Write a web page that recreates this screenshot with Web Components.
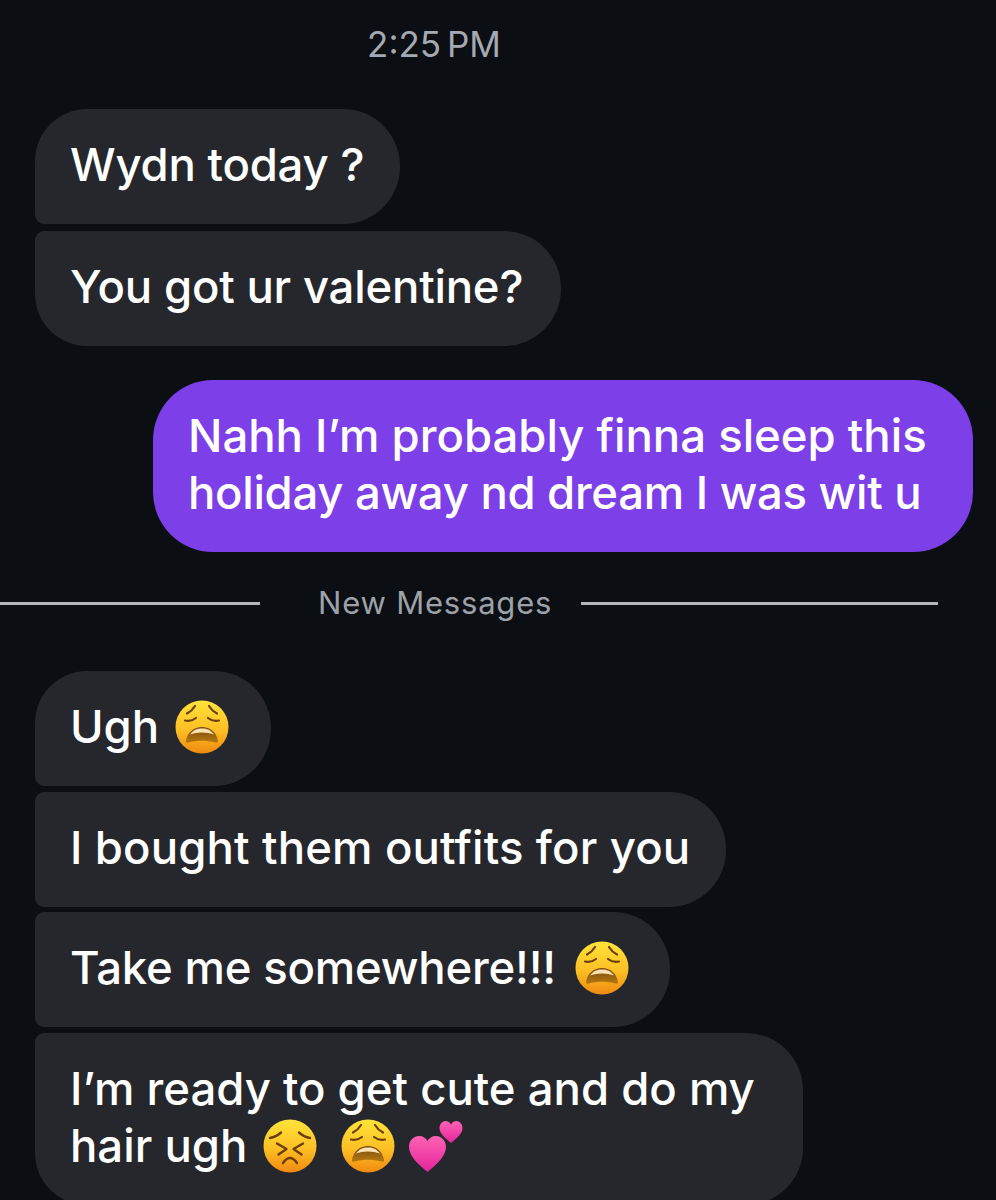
<!DOCTYPE html>
<html lang="en">
<head>
<meta charset="utf-8">
<title>Chat</title>
<style>
html,body{margin:0;padding:0;background:#0b0e13;}
body{width:996px;height:1200px;overflow:hidden;font-family:Inter,"Liberation Sans",sans-serif;}
</style>
</head>
<body>
<chat-thread>
  <chat-time>2:25 PM</chat-time>
  <chat-group style="--mt:43px;--gap:7px">
    <chat-bubble pos="first" style="--pr:36px;--ls:-.2px">Wydn today ?</chat-bubble>
    <chat-bubble pos="last" style="--pr:38px;--ls:-.2px">You got ur valentine?</chat-bubble>
  </chat-group>
  <chat-bubble mine><chat-line style="--ls:0px">Nahh I’m probably finna sleep this</chat-line> <chat-line style="--ls:-.3px">holiday away nd dream I was wit u</chat-line></chat-bubble>
  <chat-divider>New Messages</chat-divider>
  <chat-group style="--mt:42px;--gap:5.67px">
    <chat-bubble pos="first" style="--pr:42px">Ugh <chat-emoji name="weary"></chat-emoji></chat-bubble>
    <chat-bubble pos="mid" style="--ls:.15px">I bought them outfits for you</chat-bubble>
    <chat-bubble pos="mid" style="--pr:41px;--ls:-.2px">Take me somewhere!!! <chat-emoji name="weary" style="margin-left:7px"></chat-emoji></chat-bubble>
    <chat-bubble pos="last" style="--w:768px;--ls:0px">I’m ready to get cute and do my hair ugh <chat-emoji name="persevere"></chat-emoji> <chat-emoji name="weary" style="margin-left:11px"></chat-emoji> <chat-emoji name="hearts" style="margin-left:2px"></chat-emoji></chat-bubble>
  </chat-group>
</chat-thread>
<script>
const shared = {
  defs: `<defs>
    <linearGradient id="f" x1="0" y1="0" x2="0" y2="1"><stop offset="0" stop-color="#ffe33a"/><stop offset=".55" stop-color="#fdbf24"/><stop offset="1" stop-color="#f08a10"/></linearGradient>
    <linearGradient id="m" x1="0" y1="0" x2="0" y2="1"><stop offset="0" stop-color="#7a4a12"/><stop offset="1" stop-color="#b5780f"/></linearGradient>
    <linearGradient id="h" x1="0" y1="0" x2="0" y2="1"><stop offset="0" stop-color="#ff62b4"/><stop offset="1" stop-color="#e3249a"/></linearGradient>
  </defs>`
};
const EMOJI = {
  weary: `<svg viewBox="0 0 54 54" width="54" height="54" aria-hidden="true">${shared.defs}
    <circle cx="27" cy="27" r="26.5" fill="url(#f)"/>
    <g fill="none" stroke="#6b3f0c" stroke-width="2.2" stroke-linecap="round">
      <path d="M20 6Q17 11 12 13.5"/><path d="M34 6Q37 11 42 13.5"/>
      <path d="M10 20.5Q16 22 21 18"/><path d="M44 20.5Q38 22 33 18"/>
    </g>
    <path d="M11 41C12.500 32 19 27 27 27S41.500 32 43 41C43.200 42.500 42 43 40.500 42.500C32 40 22 40 13.500 42.500C12 43 10.800 42.500 11 41Z" fill="url(#m)"/>
    <path d="M15 34.500C18.500 30 22 28.500 27 28.500S35.500 30 39 34.500C32 31.800 22 31.800 15 34.500Z" fill="#f7e2b0"/>
  </svg>`,
  persevere: `<svg viewBox="0 0 54 54" width="54" height="54" aria-hidden="true">${shared.defs}
    <circle cx="27" cy="27" r="26.5" fill="url(#f)"/>
    <g fill="none" stroke="#6b3f0c" stroke-width="2.4" stroke-linecap="round" stroke-linejoin="round">
      <path d="M7 19Q13 18 18 13.500"/><path d="M47 19Q41 18 36 13.500"/>
      <path d="M14 24.500L23.500 30L15.500 35.500"/><path d="M40 24.500L30.500 30L38.500 35.500"/>
      <path d="M20 44Q27 34 34 44"/>
    </g>
  </svg>`,
  hearts: `<svg viewBox="0 0 54 54" width="54" height="54" aria-hidden="true" style="overflow:visible">${shared.defs}
    <path d="M18.500 53C9 45 0 37 0 28C0 21 5 17 10 17C14 17 17 19 18.500 22C20 19 23 17 27 17C32 17 37 21 37 28C37 37 28 45 18.500 53Z" fill="url(#h)"/>
    <path d="M42 24C36.500 19 30.500 15 30.500 9C30.500 5 33.500 2 36.500 2C39 2 41 3.500 42 5.500C43 3.500 45 2 47.500 2C50.500 2 53.500 5 53.500 9C53.500 15 47.500 19 42 24Z" fill="url(#h)"/>
  </svg>`
};
function def(tag, css, html, setup){
  customElements.define(tag, class extends HTMLElement{
    constructor(){super();this.attachShadow({mode:'open'}).innerHTML=`<style>${css}</style>${html}`;}
    connectedCallback(){ if(setup) setup.call(this); }
  });
}
def('chat-thread', `:host{display:flex;flex-direction:column;align-items:flex-start;padding:22px 23px 0 35px;box-sizing:border-box;width:996px;color:#fff;font:400 45.5px/57px Inter,"Liberation Sans",sans-serif;-webkit-font-smoothing:antialiased}`, `<slot></slot>`);
def('chat-time', `:host{display:block;width:798px;text-align:center;font-size:35px;line-height:44px;color:#a5a9b2;word-spacing:-4px}`, `<slot></slot>`);
def('chat-group', `:host{display:flex;flex-direction:column;align-items:flex-start;gap:var(--gap,6px);margin-top:var(--mt,0)}`, `<slot></slot>`);
def('chat-bubble', `
  :host{display:block;box-sizing:border-box;padding:27px var(--pr,36px) 31px 35px;background:#25272c;max-width:var(--w,none);width:fit-content;border-radius:57px;font-weight:500;letter-spacing:var(--ls,-.1px)}
  :host([pos=first]){border-radius:52px 57px 57px 9px}
  :host([pos=mid]){border-radius:9px 57px 57px 9px}
  :host([pos=last]){border-radius:9px 57px 57px 52px}
  :host([mine]){align-self:flex-end;background:#7c3fe8;width:820px;margin-top:34px;padding:27px 37px 31px 35px;border-radius:60px}
`, `<slot></slot>`);
def('chat-line', `:host{display:block;letter-spacing:var(--ls,0)}`, `<slot></slot>`);
def('chat-divider', `
  :host{display:flex;align-items:center;gap:29px;margin:25px 0 0 -35px;width:938px;font-size:31px;line-height:52px;color:#9da1a8;letter-spacing:.8px}
  i{height:3px;background:#b4b6bb;display:block}
  i:first-of-type{width:260px;flex:none} i:last-of-type{flex:1}
  span{margin-left:29px}
`, `<i></i><span><slot></slot></span><i></i>`);
def('chat-emoji', `:host{display:inline-block;width:54px;height:54px;vertical-align:-11px;line-height:0;margin-left:4px}`, ``, function(){
  if(!this.shadowRoot.querySelector('svg')) this.shadowRoot.innerHTML += EMOJI[this.getAttribute('name')];
});
</script>
</body>
</html>
